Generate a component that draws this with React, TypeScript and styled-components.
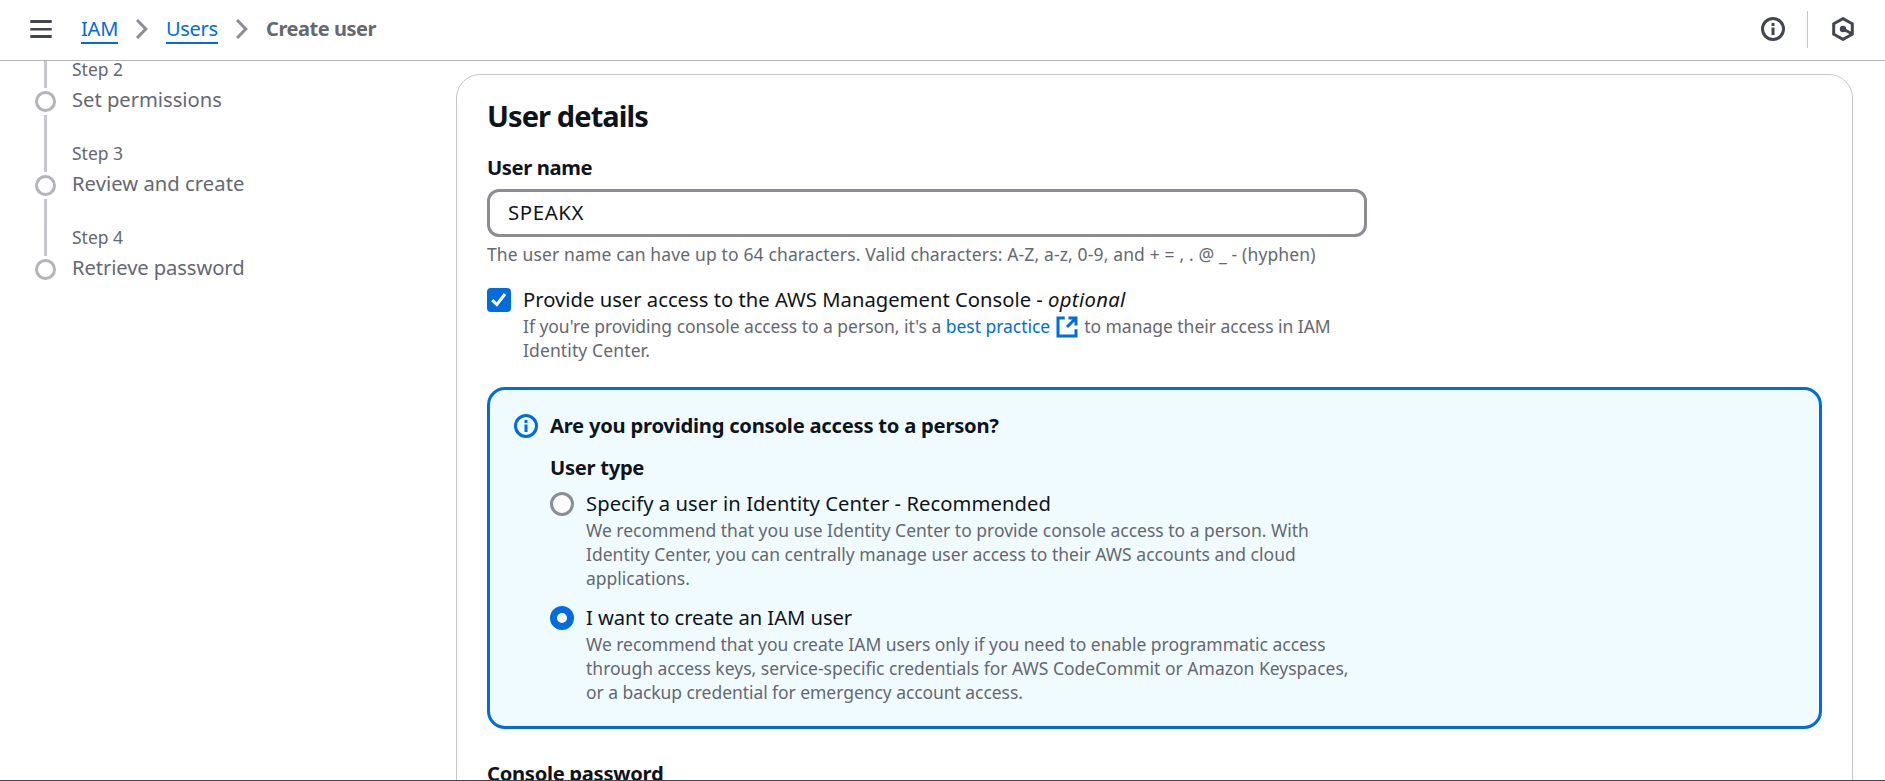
import React from "react";
import styled, { createGlobalStyle } from "styled-components";

const GlobalStyle = createGlobalStyle`
  *, *::before, *::after { box-sizing: border-box; }
  body {
    margin: 0;
    background: #fff;
    color: #0f141a;
    font-family: "Noto Sans", "Open Sans", sans-serif;
    overflow: hidden;
  }
`;

const Page = styled.div`
  display: flex;
  flex-direction: column;
  height: 781px;
  overflow: hidden;
  border-bottom: 1px solid #424650;
`;

const TopBar = styled.header`
  display: flex;
  align-items: center;
  flex: none;
  height: 61px;
  padding: 0 31px 2px 30px;
  border-bottom: 1px solid #b4b4bb;
`;

const Breadcrumbs = styled.nav`
  display: flex;
  align-items: center;
  flex: 1;
  margin-left: 29px;
`;

const Crumb = styled.a<{ $tracking: number; $width: number }>`
  width: ${(p) => p.$width}px;
  height: 28px;
  border-bottom: 2px solid #006ce0;
  color: #006ce0;
  font-size: 20px;
  line-height: 26px;
  letter-spacing: ${(p) => p.$tracking}px;
  margin-top: 1px;
  white-space: nowrap;
`;

const CurrentCrumb = styled.span`
  color: #656871;
  font-size: 20px;
  font-weight: 700;
  line-height: 30px;
  letter-spacing: -0.45px;
  white-space: nowrap;
`;

const Separator = styled.svg`
  display: block;
  width: 12px;
  height: 20px;
  margin: 0 18px 0 18px;
`;

const BarDivider = styled.span`
  width: 1px;
  height: 37px;
  margin: 0 24px 0 22px;
  background: #c6c6cd;
`;

const Body = styled.div`
  display: flex;
  flex: 1;
  min-height: 0;
  overflow: hidden;
`;

const Steps = styled.ol`
  flex: none;
  width: 456px;
  margin: 0;
  padding: 0 0 0 35px;
  list-style: none;
`;

const Step = styled.li<{ $first?: boolean }>`
  display: grid;
  grid-template-columns: 21px 1fr;
  grid-template-rows: 100%;
  column-gap: 16px;
  height: ${(p) => (p.$first ? 54 : 84)}px;
`;

const StepTrack = styled.div`
  display: flex;
  flex-direction: column;
  align-items: center;
  gap: 3px;
`;

const StepLine = styled.span`
  flex: 1;
  width: 3px;
  background: #c6c6cd;
`;

const StepDot = styled.span`
  width: 21px;
  height: 21px;
  border: 3px solid #b4b4bb;
  border-radius: 50%;
`;

const StepText = styled.div`
  display: flex;
  flex-direction: column;
  justify-content: flex-end;
  padding-bottom: 1px;
  color: #656871;
`;

const StepNumber = styled.span`
  font-size: 17.5px;
  line-height: 24px;
`;

const StepName = styled.span<{ $tracking?: number }>`
  margin-top: 3px;
  font-size: 20.2px;
  line-height: 30px;
  letter-spacing: ${(p) => p.$tracking ?? 0.05}px;
`;

const Card = styled.main`
  flex: none;
  width: 1397px;
  height: 900px;
  margin-top: 13px;
  padding: 23px 30px;
  border: 1px solid #c6c6cd;
  border-radius: 24px;
`;

const Title = styled.h2`
  margin: 0 0 18px;
  font-size: 29px;
  font-weight: 700;
  line-height: 36px;
  letter-spacing: -0.9px;
`;

const Label = styled.div<{ $tracking?: number }>`
  font-size: 20.2px;
  font-weight: 700;
  line-height: 30px;
  letter-spacing: ${(p) => p.$tracking ?? -0.4}px;
`;

const Input = styled.input`
  display: block;
  width: 880px;
  height: 48px;
  margin: 7px 0 5px;
  padding: 0 18px 2px;
  border: 3px solid #8c8c94;
  border-radius: 12px;
  outline: none;
  background: #fff;
  color: #0f141a;
  font: 400 20.4px "Noto Sans", sans-serif;
  letter-spacing: 0.6px;
`;

const Hint = styled.div<{ $tracking?: number }>`
  color: #656871;
  font-size: 17.5px;
  line-height: 24px;
  letter-spacing: ${(p) => p.$tracking ?? 0}px;
  white-space: nowrap;
`;

const Line = styled.div<{ $tracking?: number }>`
  height: 24px;
  letter-spacing: ${(p) => p.$tracking ?? 0}px;
`;

const Choice = styled.div<{ $top: number }>`
  display: grid;
  grid-template-columns: 24px auto;
  column-gap: 12px;
  justify-content: start;
  margin-top: ${(p) => p.$top}px;
`;

const ChoiceLabel = styled.div<{ $tracking?: number }>`
  font-size: 20.2px;
  line-height: 30px;
  letter-spacing: ${(p) => p.$tracking ?? 0}px;
  white-space: nowrap;
`;

const Optional = styled.i`
  letter-spacing: 0.35px;
`;

const Checkbox = styled.span`
  display: block;
  width: 24px;
  height: 24px;
  margin-top: 4px;
  border-radius: 4px;
  background: #006ce0;
`;

const Radio = styled.span<{ $checked?: boolean }>`
  width: 24px;
  height: 24px;
  margin-top: 4px;
  border: ${(p) => (p.$checked ? "7px solid #006ce0" : "3px solid #8c8c94")};
  border-radius: 50%;
  background: #fff;
`;

const Link = styled.a`
  color: #006ce0;
`;

const ExternalSvg = styled.svg`
  width: 24px;
  height: 24px;
  margin: 1px 5px -1px;
  vertical-align: top;
`;

const Alert = styled.section`
  display: grid;
  grid-template-columns: 24px 1fr;
  column-gap: 12px;
  height: 342px;
  margin: 25px 0 29px;
  padding: 20px 24px;
  border: 3px solid #006ce0;
  border-radius: 18px;
  background: #f0fbff;
`;

const InfoSvg = styled.svg`
  display: block;
  width: 24px;
  height: 24px;
`;

const AlertIcon = styled.div`
  padding-top: 4px;
`;

const UserType = styled(Label)`
  margin-top: 12px;
`;

const MenuIcon = () => (
  <svg width="22" height="20" viewBox="0 0 22 20" fill="#424650">
    <path d="M.3 1h21.4v3H.3zM.3 9h21.4v2.5H.3zM.3 16h21.4v3H.3z" />
  </svg>
);

const Chevron = () => (
  <Separator viewBox="0 0 12 20" fill="none" stroke="#8c8c94" strokeWidth="3">
    <path d="M1 1l8.8 9L1 19" />
  </Separator>
);

const Info = ({ color }: { color: string }) => (
  <InfoSvg viewBox="0 0 24 24">
    <circle cx="12" cy="12" r="10.5" fill="none" stroke={color} strokeWidth="3" />
    <path d="M10.5 6h3v3h-3zM10.5 10.5h3V18h-3z" fill={color} />
  </InfoSvg>
);

const Hexagon = () => (
  <svg width="22" height="24" viewBox="0 0 22 24">
    <path d="M11 1.6l9.3 5.2v10.4L11 22.4l-9.3-5.2V6.8z" fill="none" stroke="#424650" strokeWidth="3" />
    <circle cx="11" cy="12" r="3.2" fill="#424650" />
    <path d="M11 12l9 4.8" stroke="#424650" strokeWidth="3" />
  </svg>
);

const External = () => (
  <ExternalSvg viewBox="0 0 16 16" fill="none" stroke="#006ce0" strokeWidth="2">
    <path d="M6.5 2H2v12h12V9.5M9 2h5v5M14 2L8 8" />
  </ExternalSvg>
);

const steps = [
  { number: "Step 2", name: "Set permissions", tracking: -0.02 },
  { number: "Step 3", name: "Review and create", tracking: 0.05 },
  { number: "Step 4", name: "Retrieve password", tracking: -0.1 },
];

export default function App() {
  return (
    <>
      <GlobalStyle />
      <Page>
        <TopBar>
          <MenuIcon />
          <Breadcrumbs>
            <Crumb $tracking={-0.2} $width={37}>IAM</Crumb>
            <Chevron />
            <Crumb $tracking={-0.3} $width={52}>Users</Crumb>
            <Chevron />
            <CurrentCrumb>Create user</CurrentCrumb>
          </Breadcrumbs>
          <Info color="#424650" />
          <BarDivider />
          <Hexagon />
        </TopBar>
        <Body>
          <Steps>
            {steps.map((step, i) => (
              <Step key={step.number} $first={i === 0}>
                <StepTrack>
                  <StepLine />
                  <StepDot />
                  <span />
                </StepTrack>
                <StepText>
                  <StepNumber>{step.number}</StepNumber>
                  <StepName $tracking={step.tracking}>{step.name}</StepName>
                </StepText>
              </Step>
            ))}
          </Steps>
          <Card>
            <Title>User details</Title>
            <Label>User name</Label>
            <Input defaultValue="SPEAKX" />
            <Hint $tracking={0.14}>
              The user name can have up to 64 characters. Valid characters: A-Z, a-z, 0-9, and + = , . @ _ - (hyphen)
            </Hint>
            <Choice $top={18}>
              <Checkbox>
                <svg width="24" height="24" viewBox="0 0 24 24" fill="none" stroke="#fff" strokeWidth="3">
                  <path d="M5.2 12.2l4.6 4.4L18 6" />
                </svg>
              </Checkbox>
              <div>
                <ChoiceLabel $tracking={0.02}>
                  Provide user access to the AWS Management Console - <Optional>optional</Optional>
                </ChoiceLabel>
                <Hint>
                  <Line $tracking={-0.03}>
                    If you're providing console access to a person, it's a <Link>best practice</Link>
                    <External />
                    to manage their access in IAM
                  </Line>
                  <Line $tracking={0.12}>Identity Center.</Line>
                </Hint>
              </div>
            </Choice>
            <Alert>
              <AlertIcon>
                <Info color="#006ce0" />
              </AlertIcon>
              <div>
                <Label $tracking={-0.24}>Are you providing console access to a person?</Label>
                <UserType $tracking={-0.3}>User type</UserType>
                <Choice $top={6}>
                  <Radio />
                  <div>
                    <ChoiceLabel $tracking={0.07}>Specify a user in Identity Center - Recommended</ChoiceLabel>
                    <Hint>
                      <Line>We recommend that you use Identity Center to provide console access to a person. With</Line>
                      <Line $tracking={0.02}>Identity Center, you can centrally manage user access to their AWS accounts and cloud</Line>
                      <Line>applications.</Line>
                    </Hint>
                  </div>
                </Choice>
                <Choice $top={12}>
                  <Radio $checked />
                  <div>
                    <ChoiceLabel $tracking={-0.05}>I want to create an IAM user</ChoiceLabel>
                    <Hint>
                      <Line $tracking={-0.03}>We recommend that you create IAM users only if you need to enable programmatic access</Line>
                      <Line>through access keys, service-specific credentials for AWS CodeCommit or Amazon Keyspaces,</Line>
                      <Line $tracking={-0.06}>or a backup credential for emergency account access.</Line>
                    </Hint>
                  </div>
                </Choice>
              </div>
            </Alert>
            <Label $tracking={-0.3}>Console password</Label>
          </Card>
        </Body>
      </Page>
    </>
  );
}
